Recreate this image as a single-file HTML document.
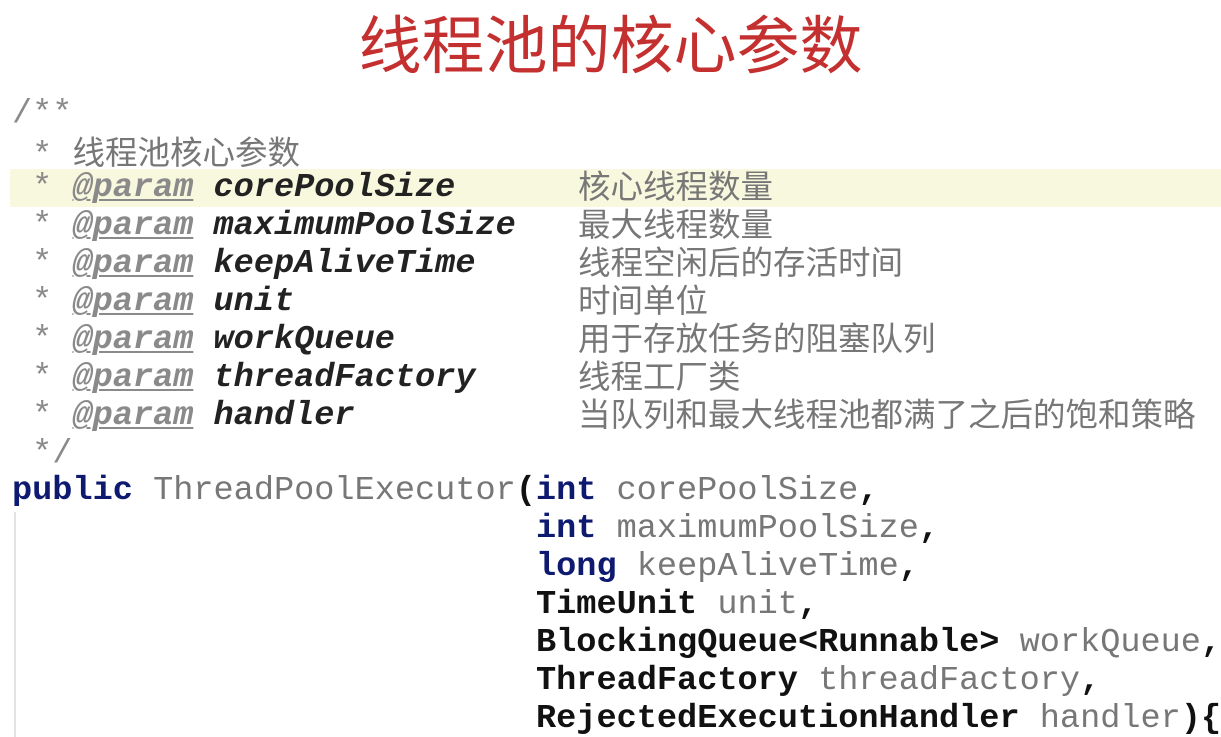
<!DOCTYPE html>
<html><head><meta charset="utf-8"><style>
html,body{margin:0;padding:0;background:#fff;width:1221px;height:737px;overflow:hidden;position:relative}
.t{position:absolute;left:0;width:1221px;top:2px;text-align:center;font:63px/80px "Noto Sans CJK SC",sans-serif;color:#c3302f}
.hl{position:absolute;left:10px;top:169px;width:1211px;height:38px;background:#f8f8df}
.l{position:absolute;left:12px;white-space:pre;font:bold 33.6px/38px "Liberation Mono",monospace;color:#111}
.c{color:#8a8a8a;font-weight:normal}
.p{color:#8a8a8a;font-style:italic;text-decoration:underline;text-decoration-thickness:2px;text-underline-offset:3px}
.n{font-style:italic;color:#222}
.k{color:#0d1a70}
.g{color:#777;font-weight:normal}
.z{position:absolute;left:578px;font:32.5px/38px "Noto Sans CJK SC",sans-serif;color:#777}
.zh{font:32.5px "Noto Sans CJK SC",sans-serif;color:#777}
.bar{position:absolute;left:14px;top:512px;width:2px;height:225px;background:#e3e3e3}
</style></head><body>
<div class="t">线程池的核心参数</div>
<div class="hl"></div>
<div class="bar"></div>
<div class="l c" style="top:95px">/**</div>
<div class="l c" style="top:127px"> * <span class="zh">线程池核心参数</span></div>
<div class="l" style="top:169px"><span class="c"> * </span><span class="p">@param</span> <span class="n">corePoolSize</span></div>
<div class="l" style="top:207px"><span class="c"> * </span><span class="p">@param</span> <span class="n">maximumPoolSize</span></div>
<div class="l" style="top:245px"><span class="c"> * </span><span class="p">@param</span> <span class="n">keepAliveTime</span></div>
<div class="l" style="top:283px"><span class="c"> * </span><span class="p">@param</span> <span class="n">unit</span></div>
<div class="l" style="top:321px"><span class="c"> * </span><span class="p">@param</span> <span class="n">workQueue</span></div>
<div class="l" style="top:359px"><span class="c"> * </span><span class="p">@param</span> <span class="n">threadFactory</span></div>
<div class="l" style="top:397px"><span class="c"> * </span><span class="p">@param</span> <span class="n">handler</span></div>
<div class="z" style="top:166px">核心线程数量</div>
<div class="z" style="top:204px">最大线程数量</div>
<div class="z" style="top:242px">线程空闲后的存活时间</div>
<div class="z" style="top:280px">时间单位</div>
<div class="z" style="top:318px">用于存放任务的阻塞队列</div>
<div class="z" style="top:356px">线程工厂类</div>
<div class="z" style="top:394px">当队列和最大线程池都满了之后的饱和策略</div>
<div class="l c" style="top:435px"> */</div>
<div class="l" style="top:472px"><span class="k">public</span> <span class="g">ThreadPoolExecutor</span>(<span class="k">int</span> <span class="g">corePoolSize</span>,</div>
<div class="l" style="top:510px;left:536px"><span class="k">int</span> <span class="g">maximumPoolSize</span>,</div>
<div class="l" style="top:548px;left:536px"><span class="k">long</span> <span class="g">keepAliveTime</span>,</div>
<div class="l" style="top:586px;left:536px">TimeUnit <span class="g">unit</span>,</div>
<div class="l" style="top:624px;left:536px">BlockingQueue&lt;Runnable&gt; <span class="g">workQueue</span>,</div>
<div class="l" style="top:662px;left:536px">ThreadFactory <span class="g">threadFactory</span>,</div>
<div class="l" style="top:700px;left:536px">RejectedExecutionHandler <span class="g">handler</span>){</div>
</body></html>
